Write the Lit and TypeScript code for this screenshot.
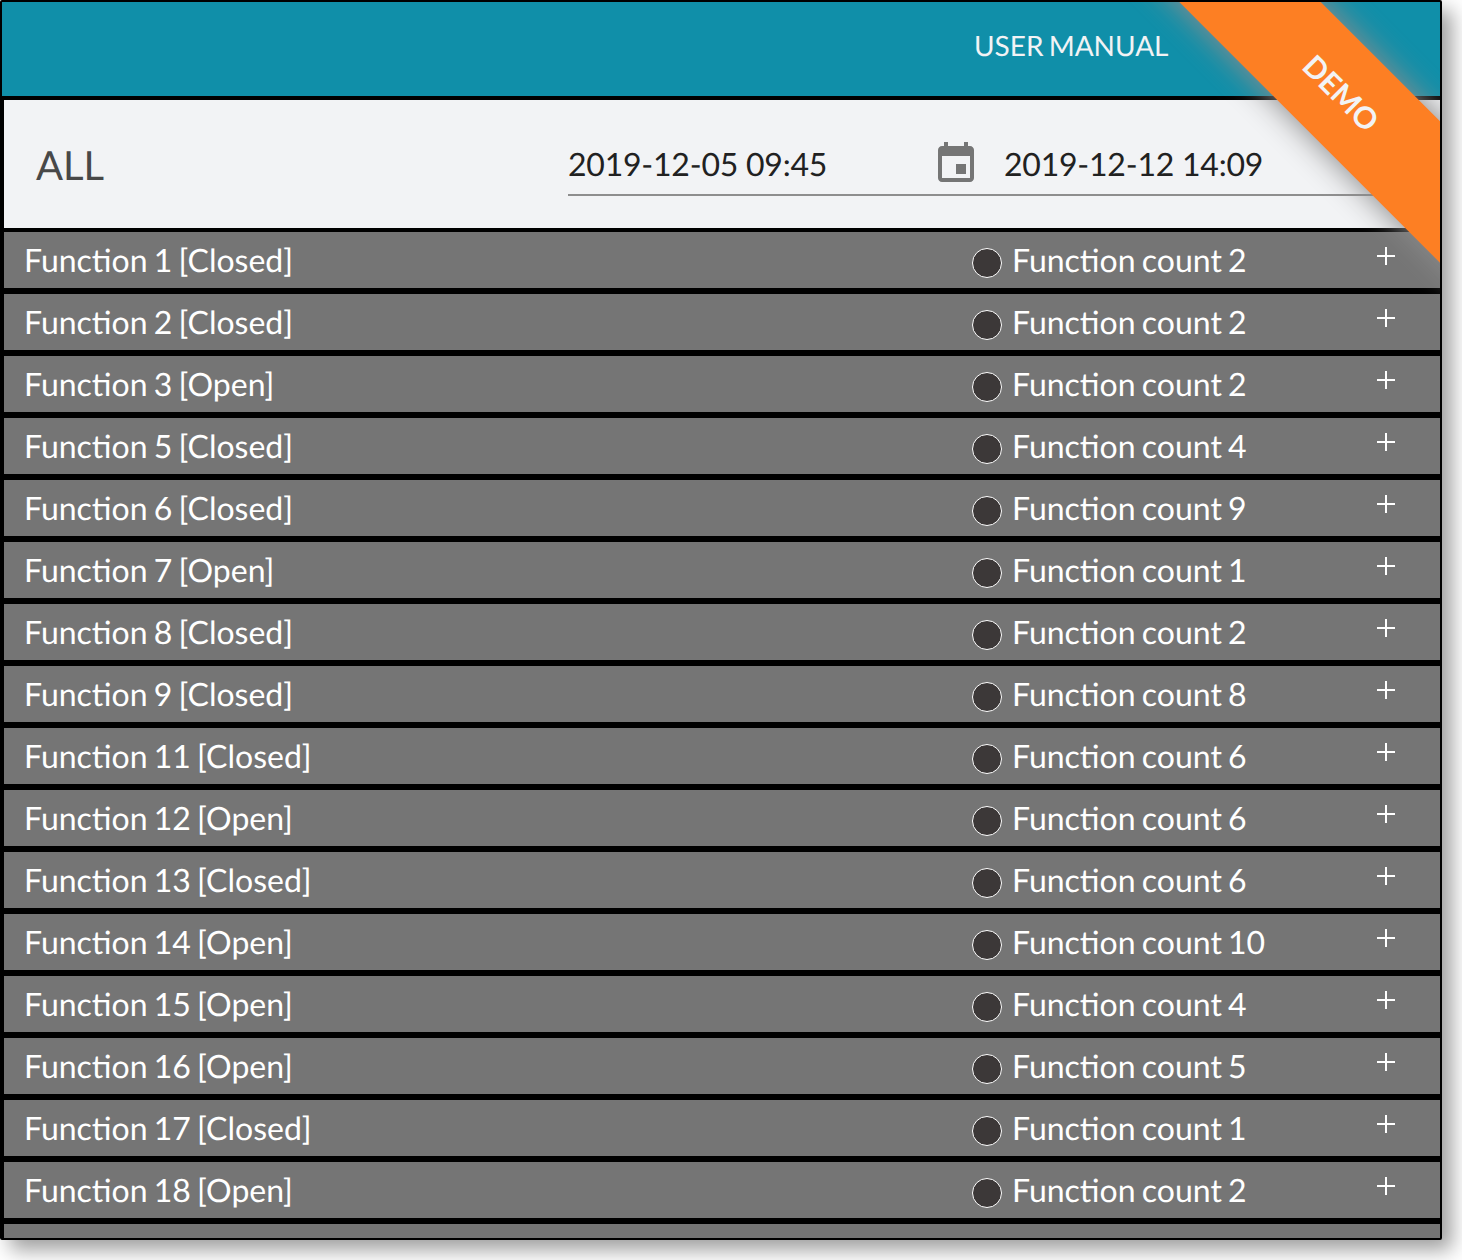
import { LitElement, html, css, svg } from "lit";
import { customElement } from "lit/decorators.js";

const ROWS: [string, number][] = [
  ["Function 1 [Closed]", 2],
  ["Function 2 [Closed]", 2],
  ["Function 3 [Open]", 2],
  ["Function 5 [Closed]", 4],
  ["Function 6 [Closed]", 9],
  ["Function 7 [Open]", 1],
  ["Function 8 [Closed]", 2],
  ["Function 9 [Closed]", 8],
  ["Function 11 [Closed]", 6],
  ["Function 12 [Open]", 6],
  ["Function 13 [Closed]", 6],
  ["Function 14 [Open]", 10],
  ["Function 15 [Open]", 4],
  ["Function 16 [Open]", 5],
  ["Function 17 [Closed]", 1],
  ["Function 18 [Open]", 2],
];

@customElement("app-root")
export class AppRoot extends LitElement {
  static styles = css`
    :host {
      display: block;
      width: 1462px;
      height: 1260px;
      font-family: "Lato", "Liberation Sans", sans-serif;
      text-rendering: geometricPrecision;
    }
    .frame {
      position: relative;
      width: 1442px;
      height: 1240px;
      box-sizing: border-box;
      border: 2px solid #000;
      border-radius: 2px;
      background: #000;
      overflow: hidden;
    }
    .shadow {
      width: 1442px;
      height: 1240px;
      border-radius: 4px;
      box-shadow: 10px 10px 20px rgba(0, 0, 0, 0.38);
    }
    .header {
      height: 94px;
      background: #108fa9;
      display: flex;
      align-items: center;
      box-sizing: border-box;
      padding: 0 0 8px 972px;
      color: #f2f3f5;
      font-size: 28px;
      word-spacing: -2px;
    }
    .body {
      padding: 4px 0 0 2px;
      display: flex;
      flex-direction: column;
      gap: 4px;
    }
    .panel {
      height: 128px;
      background: #f2f3f5;
      display: flex;
      box-sizing: border-box;
      padding-left: 32px;
    }
    .all {
      width: 532px;
      font-size: 40px;
      color: #484848;
      line-height: 130px;
    }
    .dates {
      flex: 1;
      height: 96px;
      box-sizing: border-box;
      padding-top: 32px;
      border-bottom: 2px solid #8e8e8e;
      display: flex;
      align-items: center;
      font-size: 32px;
      color: #212121;
      letter-spacing: -0.22px;
    }
    .date1 {
      width: 364px;
    }
    .dates svg {
      width: 48px;
      height: 48px;
      fill: #757575;
      margin-right: 24px;
      margin-top: 2px;
    }
    .list {
      display: flex;
      flex-direction: column;
      gap: 6px;
    }
    .row {
      flex: none;
      height: 56px;
      background: #757575;
      color: #fff;
      font-size: 32px;
      display: flex;
      align-items: center;
      box-sizing: border-box;
      padding: 0 0 2px 20px;
      word-spacing: -2px;
    }
    .name {
      width: 948px;
    }
    .dot {
      width: 28px;
      height: 28px;
      border: 1px solid #fff;
      border-radius: 50%;
      background: #3c3838;
      margin: 8px 10px 0 0;
    }
    .count {
      width: 365px;
    }
    .plus {
      width: 18px;
      height: 18px;
      margin-top: -6px;
      stroke: #fff;
      stroke-width: 2;
    }
    .ribbon-clip {
      position: absolute;
      inset: 0;
      overflow: hidden;
    }
    .ribbon {
      position: absolute;
      left: 1019px;
      top: 41px;
      width: 640px;
      height: 100px;
      transform: rotate(45deg);
      background: #fd7f23;
      box-shadow: 0 0 30px 2px #8c8c8c;
      color: #f2f3f5;
      font-size: 30px;
      font-weight: 700;
      text-align: center;
      line-height: 100px;
    }
  `;

  render() {
    return html`
      <div class="shadow">
        <div class="frame">
          <div class="header">USER MANUAL</div>
          <div class="body">
            <div class="panel">
              <div class="all">ALL</div>
              <div class="dates">
                <div class="date1">2019-12-05 09:45</div>
                <svg viewBox="0 0 24 24">
                  <path
                    d="M17 12h-5v5h5v-5zM16 1v2H8V1H6v2H5c-1.11 0-1.99.9-1.99 2L3 19c0 1.1.89 2 2 2h14c1.1 0 2-.9 2-2V5c0-1.1-.9-2-2-2h-1V1h-2zm3 18H5V8h14v11z"
                  />
                </svg>
                <div>2019-12-12 14:09</div>
              </div>
            </div>
            <div class="list">
              ${ROWS.map(
                ([name, n]) => html`
                  <div class="row">
                    <div class="name">${name}</div>
                    <div class="dot"></div>
                    <div class="count">Function count ${n}</div>
                    <svg class="plus" viewBox="0 0 18 18">
                      ${svg`<path d="M0 9h18M9 0v18" fill="none" />`}
                    </svg>
                  </div>
                `
              )}
              <div class="row"></div>
            </div>
          </div>
          <div class="ribbon-clip"><div class="ribbon">DEMO</div></div>
        </div>
      </div>
    `;
  }
}
